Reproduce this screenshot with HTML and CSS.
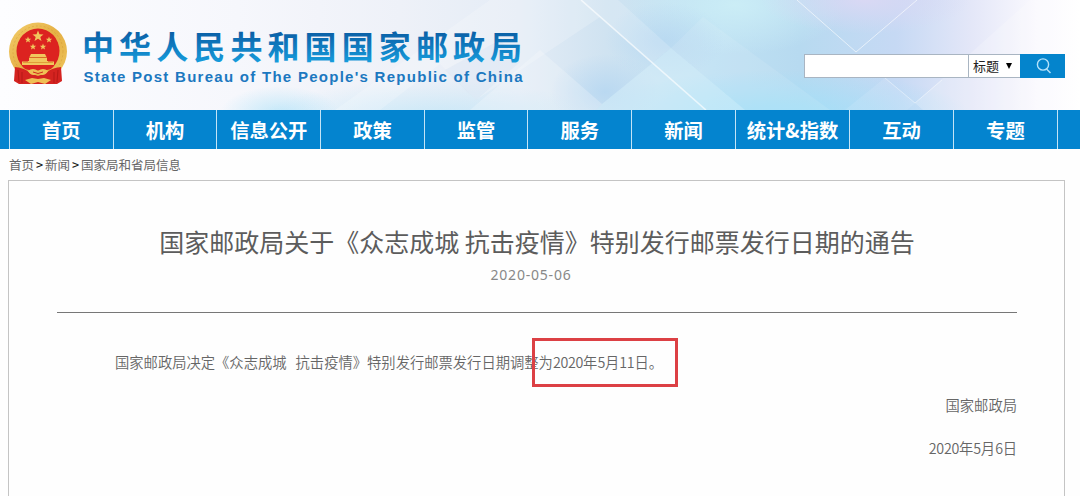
FILE: index.html
```html
<!DOCTYPE html>
<html lang="zh-CN">
<head>
    <meta charset="UTF-8">
    <meta name="viewport" content="width=device-width, initial-scale=1.0">
    <title>国家邮政局</title>
    <link rel="stylesheet" href="styles.css">
</head>
<body>

    <div class="header">
        <!-- Banner background -->
        <svg class="banner" width="1080" height="110" viewBox="0 0 1080 110" preserveAspectRatio="none">
            <defs>
                <linearGradient id="sky" x1="0" x2="1" y1="0" y2="0">
                    <stop offset="0" stop-color="#fdfdff"/>
                    <stop offset=".22" stop-color="#f6f7fc"/>
                    <stop offset=".37" stop-color="#eef1f8"/>
                    <stop offset=".48" stop-color="#e4ecf6"/>
                    <stop offset=".56" stop-color="#d0e3f1"/>
                    <stop offset=".66" stop-color="#bfe1f3"/>
                    <stop offset=".74" stop-color="#b7daf0"/>
                    <stop offset=".83" stop-color="#c6d9f4"/>
                    <stop offset=".9" stop-color="#e4e7f8"/>
                    <stop offset=".96" stop-color="#faf9fe"/>
                    <stop offset="1" stop-color="#ffffff"/>
                </linearGradient>
                <radialGradient id="cyan">
                    <stop offset="0" stop-color="#a2dff8"/>
                    <stop offset="1" stop-color="#a2dff8" stop-opacity="0"/>
                </radialGradient>
                <radialGradient id="blue">
                    <stop offset="0" stop-color="#b4d6f1"/>
                    <stop offset="1" stop-color="#b4d6f1" stop-opacity="0"/>
                </radialGradient>
                <radialGradient id="violet">
                    <stop offset="0" stop-color="#d9d8f4"/>
                    <stop offset="1" stop-color="#d9d8f4" stop-opacity="0"/>
                </radialGradient>
                <radialGradient id="mint">
                    <stop offset="0" stop-color="#cbedf6"/>
                    <stop offset="1" stop-color="#cbedf6" stop-opacity="0"/>
                </radialGradient>
            </defs>
            <rect width="1080" height="110" fill="url(#sky)"/>
            <ellipse cx="280" cy="114" rx="60" ry="28" fill="url(#cyan)" opacity=".6"/>
            <ellipse cx="430" cy="120" rx="170" ry="40" fill="url(#cyan)" opacity=".5"/>
            <ellipse cx="735" cy="5" rx="110" ry="50" fill="url(#mint)"/>
            <ellipse cx="605" cy="92" rx="55" ry="38" fill="url(#blue)" opacity=".8"/>
            <ellipse cx="665" cy="40" rx="60" ry="38" fill="url(#blue)" opacity=".7"/>
            <ellipse cx="780" cy="115" rx="190" ry="45" fill="url(#cyan)"/>
            <ellipse cx="865" cy="0" rx="105" ry="34" fill="url(#violet)"/>
            <polygon points="602,104 671,48 745,110 596,110" fill="#d9f2fa" opacity=".45"/>
            <polygon points="470,110 540,50 602,104 596,110" fill="#fff" opacity=".22"/>
            <polygon points="581,0 618,0 671,48 652,63" fill="#fff" opacity=".16"/>
            <polygon points="671,48 703,17 830,110 745,110" fill="#fff" opacity=".09"/>
            <polygon points="885,78 915,103 907,110 845,110" fill="#fff" opacity=".1"/>
            <polygon points="915,103 1030,0 1080,0 1080,110 923,110" fill="#fff" opacity=".2"/>
            <polygon points="335,110 490,0 581,0 600,17 476,100 440,64 380,110" fill="#fff" opacity=".2"/>
            <polygon points="445,70 476,100 520,62 500,40" fill="#cbdcee" opacity=".25"/>
            <path d="M581 0 706 110" stroke="#fff" stroke-width="1.6" opacity=".65" fill="none"/>
            <path d="M797 0 856 52 917 0" stroke="#fff" stroke-width="1" opacity=".6" fill="none"/>
            <path d="M885 78 915 103 942 80" stroke="#fff" stroke-width="1" opacity=".4" fill="none"/>
        </svg>

        <div class="header-inner">
            <div class="brand">
                <!-- National emblem -->
                <svg class="emblem" width="60" height="64" viewBox="0 0 60 64">
                    <defs>
                        <linearGradient id="gold" x1="0" x2="1" y1="0" y2="1">
                            <stop offset="0" stop-color="#f3cf6c"/>
                            <stop offset=".5" stop-color="#e5b045"/>
                            <stop offset="1" stop-color="#efc65c"/>
                        </linearGradient>
                    </defs>
                    <ellipse cx="30" cy="29.500" rx="29" ry="29" fill="url(#gold)"/>
                    <ellipse cx="30" cy="29.500" rx="25" ry="25.500" fill="none" stroke="#c98d28" stroke-width="1" stroke-dasharray="2 2" opacity=".35"/>
                    <ellipse cx="30" cy="29" rx="21.500" ry="22.500" fill="#dc2320"/>
                    <g fill="#f1c75d">
                        <path id="star" d="M30 8.500 31.500 12.300 35.500 12.500 32.300 15 33.500 19 30 16.700 26.500 19 27.700 15 24.500 12.500 28.500 12.300z"/>
                        <use href="#star" transform="translate(2.600 9.500) scale(.58)"/>
                        <use href="#star" transform="translate(23.600 9.500) scale(.58)"/>
                        <use href="#star" transform="translate(7.600 16.500) scale(.58)"/>
                        <use href="#star" transform="translate(17.600 16.500) scale(.58)"/>
                        <path d="M23 32h14l1.500 3h-17zM21 36h18v3h1v4H20v-4h1z"/>
                        <path d="M14 39.500h32v3.500H14z"/>
                    </g>
                    <path d="M21 35.500h18M15 40.500h30" stroke="#d98a2a" stroke-width=".7"/>
                    <path d="M12 46q18 5 36 0l-4 7q-14 6-28 0z" fill="#e3ab40"/>
                    <path d="M7 45q10 1 15 6l8 3 8-3q5-5 15-6l1 14-5 3H11l-5-3z" fill="#d42320"/>
                    <path d="M10 48l1 12M14 50v11M50 48l-1 12M46 50v11" stroke="#a91513" stroke-width="1" opacity=".7"/>
                    <path d="M20 49q5-4 10 0 5-4 10 0-3 6-10 3-7 3-10-3zM17 58l7-2 6 1 6-1 7 2-6 4-7-2-7 2z" fill="#efbf55"/>
                    <path d="M25 50q5 3 10 0" stroke="#cf2a1f" stroke-width="1" fill="none"/>
                </svg>
                <svg class="brand-text" width="446" height="64" viewBox="0 0 446 64">
                    <defs>
                        <linearGradient id="ink" gradientUnits="userSpaceOnUse" x1="0" x2="0" y1="8" y2="42">
                            <stop offset="0" stop-color="#0a5ca3"/>
                            <stop offset=".5" stop-color="#107cc0"/>
                            <stop offset="1" stop-color="#17a0df"/>
                        </linearGradient>
                    </defs>
                    <text class="brand-cn" x="1" y="36.500" fill="url(#ink)">中华人民共和国国家邮政局</text>
                    <text class="brand-en" x="2.500" y="60" textLength="439">State Post Bureau of The People's Republic of China</text>
                </svg>
            </div>

            <form class="search">
                <input class="search-input" type="text">
                <div class="search-type">标题<span class="arrow"></span></div>
                <button class="search-btn" type="button">
                    <svg width="18" height="18" viewBox="0 0 18 18" fill="none" stroke="#b5e2fa" stroke-width="1.400">
                        <circle cx="9" cy="7.500" r="5.600"/>
                        <path d="M12.500 12l4 4"/>
                    </svg>
                </button>
            </form>
        </div>
    </div>

    <div class="nav">
        <a class="nav-item">首页</a>
        <a class="nav-item">机构</a>
        <a class="nav-item">信息公开</a>
        <a class="nav-item">政策</a>
        <a class="nav-item">监管</a>
        <a class="nav-item">服务</a>
        <a class="nav-item">新闻</a>
        <a class="nav-item wide">统计&amp;指数</a>
        <a class="nav-item">互动</a>
        <a class="nav-item">专题</a>
    </div>

    <div class="crumbs">首页<b>&gt;</b>新闻<b>&gt;</b>国家局和省局信息</div>

    <div class="article">
        <h1>国家邮政局关于《众志成城 抗击疫情》特别发行邮票发行日期的通告</h1>
        <p class="date">2020-05-06</p>
        <div class="content">
            <p class="text">国家邮政局决定《众志成城<span class="gap"></span>抗击疫情》特别发行邮票发行日期调整<span class="mark">为<i>2020</i>年<i>5</i>月<i>11</i>日。</span></p>
            <p class="sign">国家邮政局</p>
            <p class="sign"><i>2020</i>年<i>5</i>月<i>6</i>日</p>
        </div>
    </div>

</body>
</html>
```

FILE: styles.css
```css
*,
*::after {
    box-sizing: border-box;
}

body {
    margin: 0;
    height: 496px;
    overflow: hidden;
    background: #fefefe;
    color: #666;
    font-family: "Noto Sans CJK SC", sans-serif;
}

.header {
    position: relative;
    height: 110px;
}

.banner {
    position: absolute;
    top: 0;
    left: 0;
    width: 100%;
}

.header-inner {
    position: relative;
    display: flex;
    justify-content: space-between;
    padding: 22px 15px 0 8px;
}

.brand {
    display: flex;
    gap: 13px;
}

.brand-text {
    overflow: visible;
}

.brand-cn {
    font-size: 32px;
    font-weight: 700;
    letter-spacing: 5.1px;
}

.brand-en {
    font-family: "Liberation Sans", Arial, sans-serif;
    font-size: 15px;
    font-weight: 700;
    fill: #1c78c0;
}

.search {
    display: flex;
    height: 24px;
    margin-top: 32px;
}

.search-input {
    width: 164px;
    padding: 0 5px;
    border: 1px solid #a9b5c2;
    border-right: none;
    background: #fff;
}

.search-type {
    display: flex;
    align-items: center;
    justify-content: space-between;
    width: 52px;
    padding: 0 8px 0 4px;
    border: 1px solid #a9b5c2;
    border-right: none;
    background: #fff;
    color: #222;
    font-size: 13px;
    line-height: 22px;
}

.arrow {
    border: 3px solid transparent;
    border-top: 6px solid #000;
    border-bottom: none;
}

.search-btn {
    display: flex;
    align-items: center;
    justify-content: center;
    width: 45px;
    padding: 0;
    border: none;
    background: #0484cc;
}

.nav {
    display: flex;
    height: 39px;
    padding-left: 9px;
    background: #0484cf;
}

.nav-item {
    width: 103.7px;
    border-left: 1px solid #c4e4f6;
    color: #fff;
    font-size: 19.3px;
    font-weight: 700;
    line-height: 40px;
    text-align: center;
    white-space: nowrap;
}

.nav-item.wide {
    width: 114.4px;
}

.nav-item:last-child {
    width: 105px;
    border-right: 1px solid #c4e4f6;
}

.crumbs {
    height: 31px;
    padding-left: 9px;
    font-size: 12.5px;
    line-height: 32px;
}

.crumbs b {
    display: inline-block;
    width: 11px;
    color: #222;
    font-weight: 500;
    text-align: center;
}

.article {
    width: 1057px;
    height: 330px;
    margin-left: 8px;
    padding: 41px 47px 0 48px;
    border: 1px solid #c4c4c4;
    background: #fefefe;
}

h1 {
    margin: 0;
    color: #5c5c5c;
    font-size: 25px;
    font-weight: 400;
    line-height: 38px;
    text-align: center;
    white-space: nowrap;
}

.date {
    margin: 0;
    padding: 2px 12px 25px 0;
    border-bottom: 1px solid #777;
    color: #888;
    font-family: "Noto Sans", sans-serif;
    font-size: 14px;
    letter-spacing: 0.8px;
    line-height: 25px;
    text-align: center;
}

.content {
    padding-top: 27px;
    font-size: 14.3px;
    font-weight: 350;
    line-height: 43px;
}

.content p {
    margin: 0;
    white-space: nowrap;
}

.content i {
    font-style: normal;
    letter-spacing: -0.3px;
}

.text {
    padding-left: 58px;
}

.gap {
    display: inline-block;
    width: 9px;
}

.mark {
    position: relative;
}

/* red frame around the new date */
.mark::after {
    content: "";
    position: absolute;
    top: -13px;
    left: -7px;
    width: 146px;
    height: 49px;
    border: 3px solid #dc4044;
}

.sign {
    text-align: right;
}
```
